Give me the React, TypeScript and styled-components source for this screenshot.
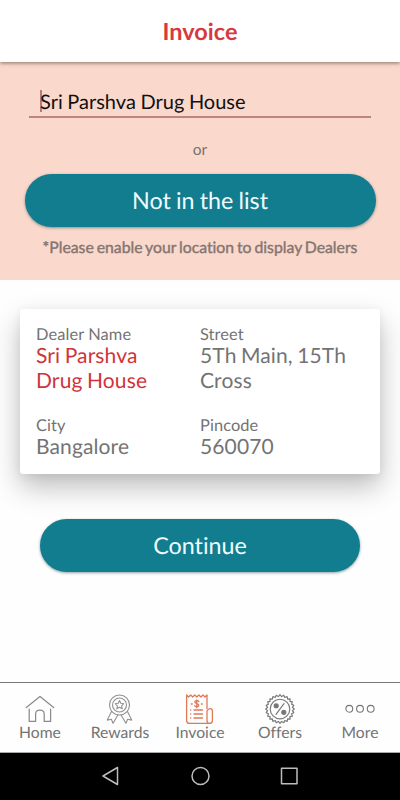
import React from "react";
import styled, { createGlobalStyle } from "styled-components";

const GlobalStyle = createGlobalStyle`
  * { box-sizing: border-box; }
  body {
    margin: 0;
    background: #fff;
    font-family: Lato, sans-serif;
    font-variant-ligatures: none;
    text-rendering: geometricPrecision;
  }
`;

const Screen = styled.div`
  width: 400px;
  height: 800px;
  display: flex;
  flex-direction: column;
  overflow: hidden;
  background: #fefefe;
  color: #737373;
`;

const Header = styled.header`
  flex: none;
  height: 62px;
  display: flex;
  align-items: center;
  justify-content: center;
  background: #fff;
  box-shadow: 0 1px 4px rgba(60, 40, 20, 0.6);
  z-index: 1;
`;

const Title = styled.h1`
  margin: 0;
  padding-top: 1px;
  font-size: 23.5px;
  line-height: 28px;
  font-weight: 700;
  color: #d63a3e;
`;

const SearchPanel = styled.section`
  flex: none;
  height: 218px;
  padding: 25px 24px 0;
  display: flex;
  flex-direction: column;
  align-items: center;
  background: #fbd8cc;
`;

const DealerField = styled.div`
  width: 342px;
  height: 31px;
  padding: 3px 0 0 11px;
  display: flex;
  border-bottom: 2px solid #bb8580;
  font-size: 20px;
  line-height: 25px;
  word-spacing: -0.5px;
  color: #111;
`;

const Caret = styled.span`
  width: 2px;
  height: 22px;
  margin: 0 -2px 0 0;
  background: #b37c79;
`;

const Or = styled.span`
  margin-top: 22px;
  font-size: 15.5px;
  line-height: 20px;
`;

const PillButton = styled.button<{ $width: number; $top: number }>`
  flex: none;
  align-self: center;
  width: ${(p) => p.$width}px;
  height: 53px;
  margin-top: ${(p) => p.$top}px;
  padding: 0;
  border: 0;
  border-radius: 27px;
  background: #127d8e;
  color: #effcff;
  font: inherit;
  font-variant-ligatures: none;
  text-rendering: inherit;
  word-spacing: -0.8px;
  font-size: 23.3px;
  line-height: 53px;
  box-shadow: 0 1px 3px rgba(0, 50, 60, 0.45);
`;

const Note = styled.p`
  margin: 11px 0 0;
  font-size: 15.8px;
  line-height: 20px;
  -webkit-text-stroke: 0.4px currentColor;
  word-spacing: -1.2px;
  white-space: nowrap;
  color: #857570;
`;

const DealerCard = styled.dl`
  flex: none;
  width: 360px;
  height: 165px;
  margin: 29px 0 0 20px;
  padding: 17px 16px 0;
  display: grid;
  grid-template-columns: 164px 1fr;
  grid-template-rows: 91px auto;
  border-radius: 3px;
  background: #fff;
  box-shadow: 0 13px 28px rgba(0, 0, 0, 0.26), 0 2px 10px rgba(0, 0, 0, 0.06);
`;

const Label = styled.dt`
  font-size: 16.4px;
  line-height: 17px;
  letter-spacing: 0.1px;
`;

const Value = styled.dd<{ $accent?: boolean; $width?: number }>`
  margin: 0;
  width: ${(p) => (p.$width ? `${p.$width}px` : "auto")};
  font-size: 21px;
  line-height: 25px;
  letter-spacing: 0.12px;
  word-spacing: -1px;
  color: ${(p) => (p.$accent ? "#d0343a" : "#737373")};
`;

const TabBar = styled.nav`
  flex: none;
  height: 71px;
  margin-top: auto;
  display: grid;
  grid-template-columns: repeat(5, 80px);
  border-top: 1px solid #777;
  border-bottom: 1px solid #aaa;
  background: #fefefe;
`;

const Tab = styled.a`
  padding-top: 10px;
  display: flex;
  flex-direction: column;
  align-items: center;
  font-size: 15.7px;
  line-height: 18px;
`;

const TabIcon = styled.svg`
  flex: none;
  width: 32px;
  height: 32px;
  margin-bottom: -1px;
  fill: none;
  stroke-linecap: round;
  stroke-linejoin: round;
`;

const SystemBar = styled.footer`
  flex: none;
  height: 47px;
  padding-bottom: 1px;
  display: flex;
  align-items: center;
  justify-content: center;
  gap: 64px;
  background: #000;
`;

const SystemIcon = styled.svg`
  width: 25px;
  height: 24px;
  fill: none;
  stroke: #bdbdbd;
  stroke-width: 1.5;
  stroke-linejoin: round;
`;

const ring = (count: number, outer: number, inner: number) => {
  const points: string[] = [];
  for (let i = 0; i < count * 2; i++) {
    const r = i % 2 ? inner : outer;
    const a = (i * Math.PI) / count;
    points.push(`${(16 + r * Math.sin(a)).toFixed(2)},${(16 - r * Math.cos(a)).toFixed(2)}`);
  }
  return points.join(" ");
};

const HomeIcon = () => (
  <TabIcon viewBox="0 0 32 32" stroke="#8b8b8b" strokeWidth="1.25">
    <path d="M2.3 14.5 16 3.5l13.7 11" />
    <path d="M5.2 16v12.4h6.4V21c0-5.2 8.6-5.2 8.6 0v7.4h6.4V16" />
  </TabIcon>
);

const RewardsIcon = () => (
  <TabIcon viewBox="0 0 32 32" stroke="#919191" strokeWidth="1.1">
    <circle cx="15.5" cy="12" r="10" />
    <circle cx="15.5" cy="12" r="7" />
    <path d="m15.5 7.5 1.3 2.8 3 .4-2.2 2.1.6 3-2.7-1.5-2.7 1.5.6-3-2.2-2.1 3-.4z" />
    <path d="m7.5 18.5-4.2 8.6 4-.8 1.8 4 4.8-8.4M23.5 18.5l4.2 8.6-4-.8-1.8 4-4.8-8.4" />
  </TabIcon>
);

const InvoiceIcon = () => (
  <TabIcon viewBox="0 0 32 32" stroke="#df7957" strokeWidth="1.3">
    <path d="M23 15.5V2l-2 2-2-2-2.1 2-2-2-2.1 2-2-2-2.1 2-2-2-2.1 2-2-2v25.4q0 3 3 3h19.8q3 0 3-3V18q0-2.3-2.2-2.3T23 18v9.4q0 3 2.4 3" />
    <path d="M14.8 8.6c-.5-1.3-4-1.4-4 .5s4 1.3 4 3.2-3.5 1.8-4 .4M12.8 7v7.8M7.3 11h.9M17.4 11h.9M6.6 17h.2M6.6 21h.2M6.6 25h.2M10 17h8.5M10 21h8.5M10 25h8.5" />
  </TabIcon>
);

const OffersIcon = () => (
  <TabIcon viewBox="0 0 32 32" stroke="#777" strokeWidth="1.15">
    <polygon points={ring(24, 14.3, 12.5)} />
    <circle cx="16" cy="16" r="9.8" />
    <path d="m20 10.6-8 10.8" />
    <circle cx="12.2" cy="12.7" r="2" fill="#777" />
    <circle cx="19.8" cy="19.3" r="2" fill="#777" />
  </TabIcon>
);

const MoreIcon = () => (
  <TabIcon viewBox="0 0 32 32" stroke="#777" strokeWidth="1.1">
    <circle cx="5.3" cy="15.8" r="3.4" />
    <circle cx="16" cy="15.8" r="3.4" />
    <circle cx="26.7" cy="15.8" r="3.4" />
  </TabIcon>
);

const tabs = [
  { name: "Home", Icon: HomeIcon },
  { name: "Rewards", Icon: RewardsIcon },
  { name: "Invoice", Icon: InvoiceIcon },
  { name: "Offers", Icon: OffersIcon },
  { name: "More", Icon: MoreIcon },
];

const dealer = [
  { label: "Dealer Name", value: "Sri Parshva Drug House", accent: true, width: 130 },
  { label: "Street", value: "5Th Main, 15Th Cross" },
  { label: "City", value: "Bangalore" },
  { label: "Pincode", value: "560070" },
];

export default function App() {
  return (
    <Screen>
      <GlobalStyle />
      <Header>
        <Title>Invoice</Title>
      </Header>
      <SearchPanel>
        <DealerField>
          <Caret />
          Sri Parshva Drug House
        </DealerField>
        <Or>or</Or>
        <PillButton $width={351} $top={14}>Not in the list</PillButton>
        <Note>*Please enable your location to display Dealers</Note>
      </SearchPanel>
      <DealerCard>
        {dealer.map((d) => (
          <div key={d.label}>
            <Label>{d.label}</Label>
            <Value $accent={d.accent} $width={d.width}>{d.value}</Value>
          </div>
        ))}
      </DealerCard>
      <PillButton $width={320} $top={45}>Continue</PillButton>
      <TabBar>
        {tabs.map(({ name, Icon }) => (
          <Tab key={name}>
            <Icon />
            {name}
          </Tab>
        ))}
      </TabBar>
      <SystemBar>
        <SystemIcon viewBox="0 0 25 24">
          <path d="M18.5 3.5v17L4 12z" />
        </SystemIcon>
        <SystemIcon viewBox="0 0 25 24">
          <circle cx="12.5" cy="12" r="8.5" />
        </SystemIcon>
        <SystemIcon viewBox="0 0 25 24">
          <rect x="4.5" y="4.2" width="15.5" height="15.5" />
        </SystemIcon>
      </SystemBar>
    </Screen>
  );
}
